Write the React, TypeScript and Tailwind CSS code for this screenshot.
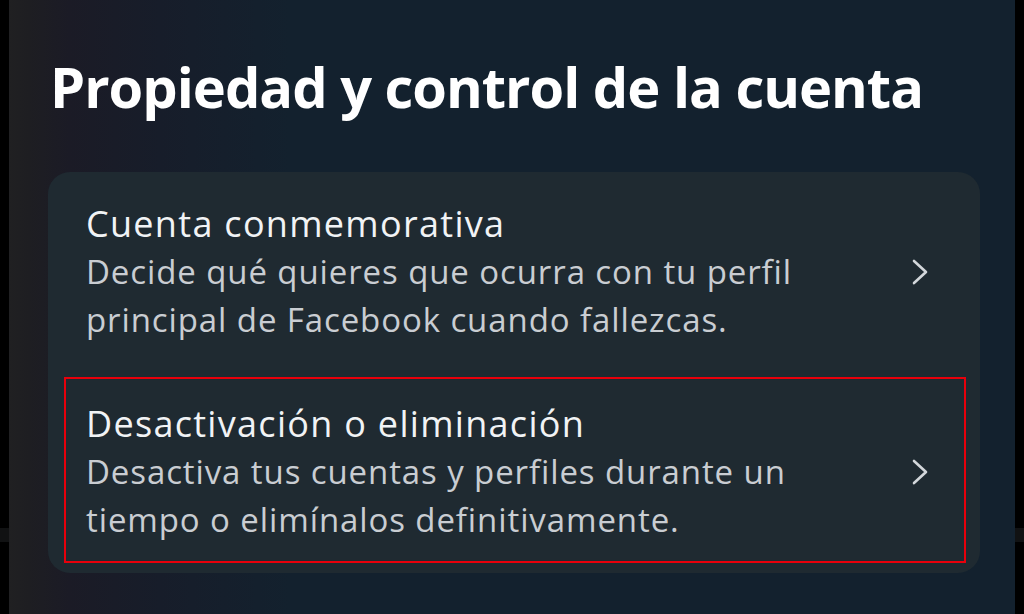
import React from "react";

function Chevron() {
  return (
    <svg width="20" height="26" viewBox="0 0 20 26" fill="none" className="shrink-0">
      <path d="M4 2 L16 13 L4 24" stroke="#d3d7db" strokeWidth="2.6" strokeLinecap="round" strokeLinejoin="round" />
    </svg>
  );
}

function Item({ title, lines }: { title: string; lines: string[] }) {
  return (
    <div className="flex items-center pl-[38px] pr-[50px] h-[200px]">
      <div className="flex-1 flex flex-col">
        <div className="text-[36px] leading-[48px] tracking-[1.3px] text-[#f1f3f5]">{title}</div>
        {lines.map((l) => (
          <div key={l} className="text-[33px] leading-[48px] tracking-[0.9px] text-[#c9cdd2]">{l}</div>
        ))}
      </div>
      <Chevron />
    </div>
  );
}

function Strip() {
  return (
    <div className="w-[9px] h-full bg-black flex flex-col">
      <div className="h-[528px]" />
      <div className="h-[14px] bg-[#111213]" />
    </div>
  );
}

export default function App() {
  return (
    <div
      className="w-[1024px] h-[614px] overflow-hidden bg-black flex"
      style={{ fontFamily: "'Open Sans', Roboto, sans-serif" }}
    >
      <Strip />
      <div className="flex-1 h-full bg-[linear-gradient(90deg,#202022_0%,#1e1e22_2%,#1b1b26_6%,#171d2a_15%,#13212e_28%,#13212e_100%)] flex flex-col">
        <h1 className="mt-[52px] ml-[41px] text-[56px] leading-[68px] font-bold text-white tracking-[-1px]">
          Propiedad y control de la cuenta
        </h1>
        <div className="mt-[52px] ml-[39px] w-[932px] h-[401px] rounded-[22px] bg-[#1f2a31] flex flex-col relative">
          <Item
            title="Cuenta conmemorativa"
            lines={["Decide qué quieres que ocurra con tu perfil", "principal de Facebook cuando fallezcas."]}
          />
          <Item
            title="Desactivación o eliminación"
            lines={["Desactiva tus cuentas y perfiles durante un", "tiempo o elimínalos definitivamente."]}
          />
          <div className="absolute left-[16px] top-[205px] w-[902px] h-[186px] border-[2.5px] border-[#e8000b] pointer-events-none" />
        </div>
      </div>
      <Strip />
    </div>
  );
}
